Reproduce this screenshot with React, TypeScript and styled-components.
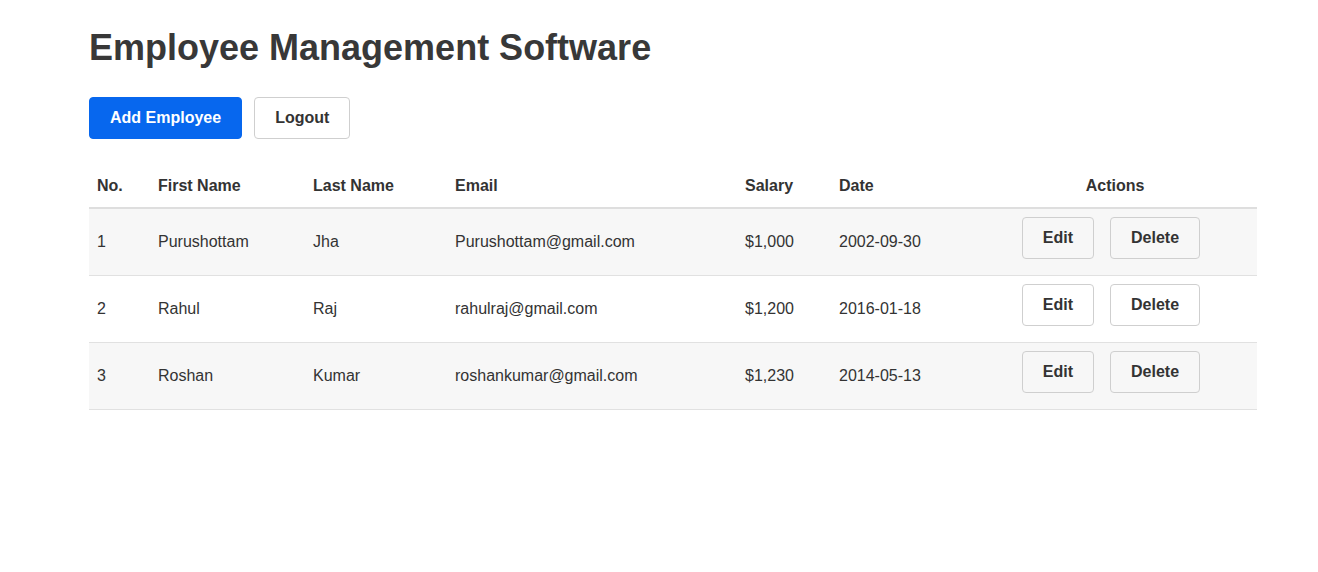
import React from 'react';
import styled, { createGlobalStyle } from 'styled-components';

const GlobalStyle = createGlobalStyle`
  body {
    margin: 0;
    background: #fff;
    color: #333;
    font-family: "Liberation Sans", Arial, sans-serif;
    font-size: 16px;
  }
`;

const Page = styled.div`
  width: 1168px;
  margin-left: 89px;
  padding-top: 26px;
`;

const Title = styled.h1`
  margin: 0;
  font-size: 36px;
  line-height: 43px;
  font-weight: 700;
  color: #383838;
`;

const Toolbar = styled.div`
  display: flex;
  gap: 12px;
  margin-top: 28px;
`;

const Button = styled.button<{ $primary?: boolean }>`
  height: 42px;
  padding: 0 20px;
  border-radius: 4px;
  border: 1px solid ${(p) => (p.$primary ? '#0767ee' : '#cfcfcf')};
  background: ${(p) => (p.$primary ? '#0767ee' : 'transparent')};
  color: ${(p) => (p.$primary ? '#fff' : '#333')};
  font-family: "Liberation Sans", Arial, sans-serif;
  font-size: 16px;
  font-weight: 700;
  cursor: pointer;
`;

const RowButton = styled(Button)`
  margin-bottom: 7px;
  vertical-align: top;
`;

const Table = styled.table`
  width: 100%;
  margin-top: 25px;
  border-collapse: collapse;
  table-layout: fixed;
`;

const Th = styled.th<{ $align?: string }>`
  padding: 12px 8px;
  line-height: 19px;
  text-align: ${(p) => p.$align || 'left'};
  font-weight: 700;
  border-bottom: 2px solid #dedede;
`;

const Row = styled.tr<{ $shaded: boolean }>`
  background: ${(p) => (p.$shaded ? '#f7f7f7' : '#fff')};
  border-bottom: 1px solid #e1e1e1;
`;

const Td = styled.td<{ $align?: string }>`
  height: 67px;
  padding: 0 8px;
  box-sizing: border-box;
  text-align: ${(p) => p.$align || 'left'};
  vertical-align: middle;
`;

const employees = [
  { id: 1, firstName: 'Purushottam', lastName: 'Jha', email: 'Purushottam@gmail.com', salary: '$1,000', date: '2002-09-30' },
  { id: 2, firstName: 'Rahul', lastName: 'Raj', email: 'rahulraj@gmail.com', salary: '$1,200', date: '2016-01-18' },
  { id: 3, firstName: 'Roshan', lastName: 'Kumar', email: 'roshankumar@gmail.com', salary: '$1,230', date: '2014-05-13' },
];

const widths = [61, 155, 142, 290, 94, 142, 129, 155];

export default function App() {
  return (
    <>
      <GlobalStyle />
      <Page>
        <Title>Employee Management Software</Title>
        <Toolbar>
          <Button $primary>Add Employee</Button>
          <Button>Logout</Button>
        </Toolbar>
        <Table>
          <colgroup>
            {widths.map((w, i) => (
              <col key={i} style={{ width: w }} />
            ))}
          </colgroup>
          <thead>
            <tr>
              <Th>No.</Th>
              <Th>First Name</Th>
              <Th>Last Name</Th>
              <Th>Email</Th>
              <Th>Salary</Th>
              <Th>Date</Th>
              <Th colSpan={2} $align="center">Actions</Th>
            </tr>
          </thead>
          <tbody>
            {employees.map((e, i) => (
              <Row key={e.id} $shaded={i % 2 === 0}>
                <Td>{i + 1}</Td>
                <Td>{e.firstName}</Td>
                <Td>{e.lastName}</Td>
                <Td>{e.email}</Td>
                <Td>{e.salary}</Td>
                <Td>{e.date}</Td>
                <Td $align="right">
                  <RowButton>Edit</RowButton>
                </Td>
                <Td>
                  <RowButton>Delete</RowButton>
                </Td>
              </Row>
            ))}
          </tbody>
        </Table>
      </Page>
    </>
  );
}
